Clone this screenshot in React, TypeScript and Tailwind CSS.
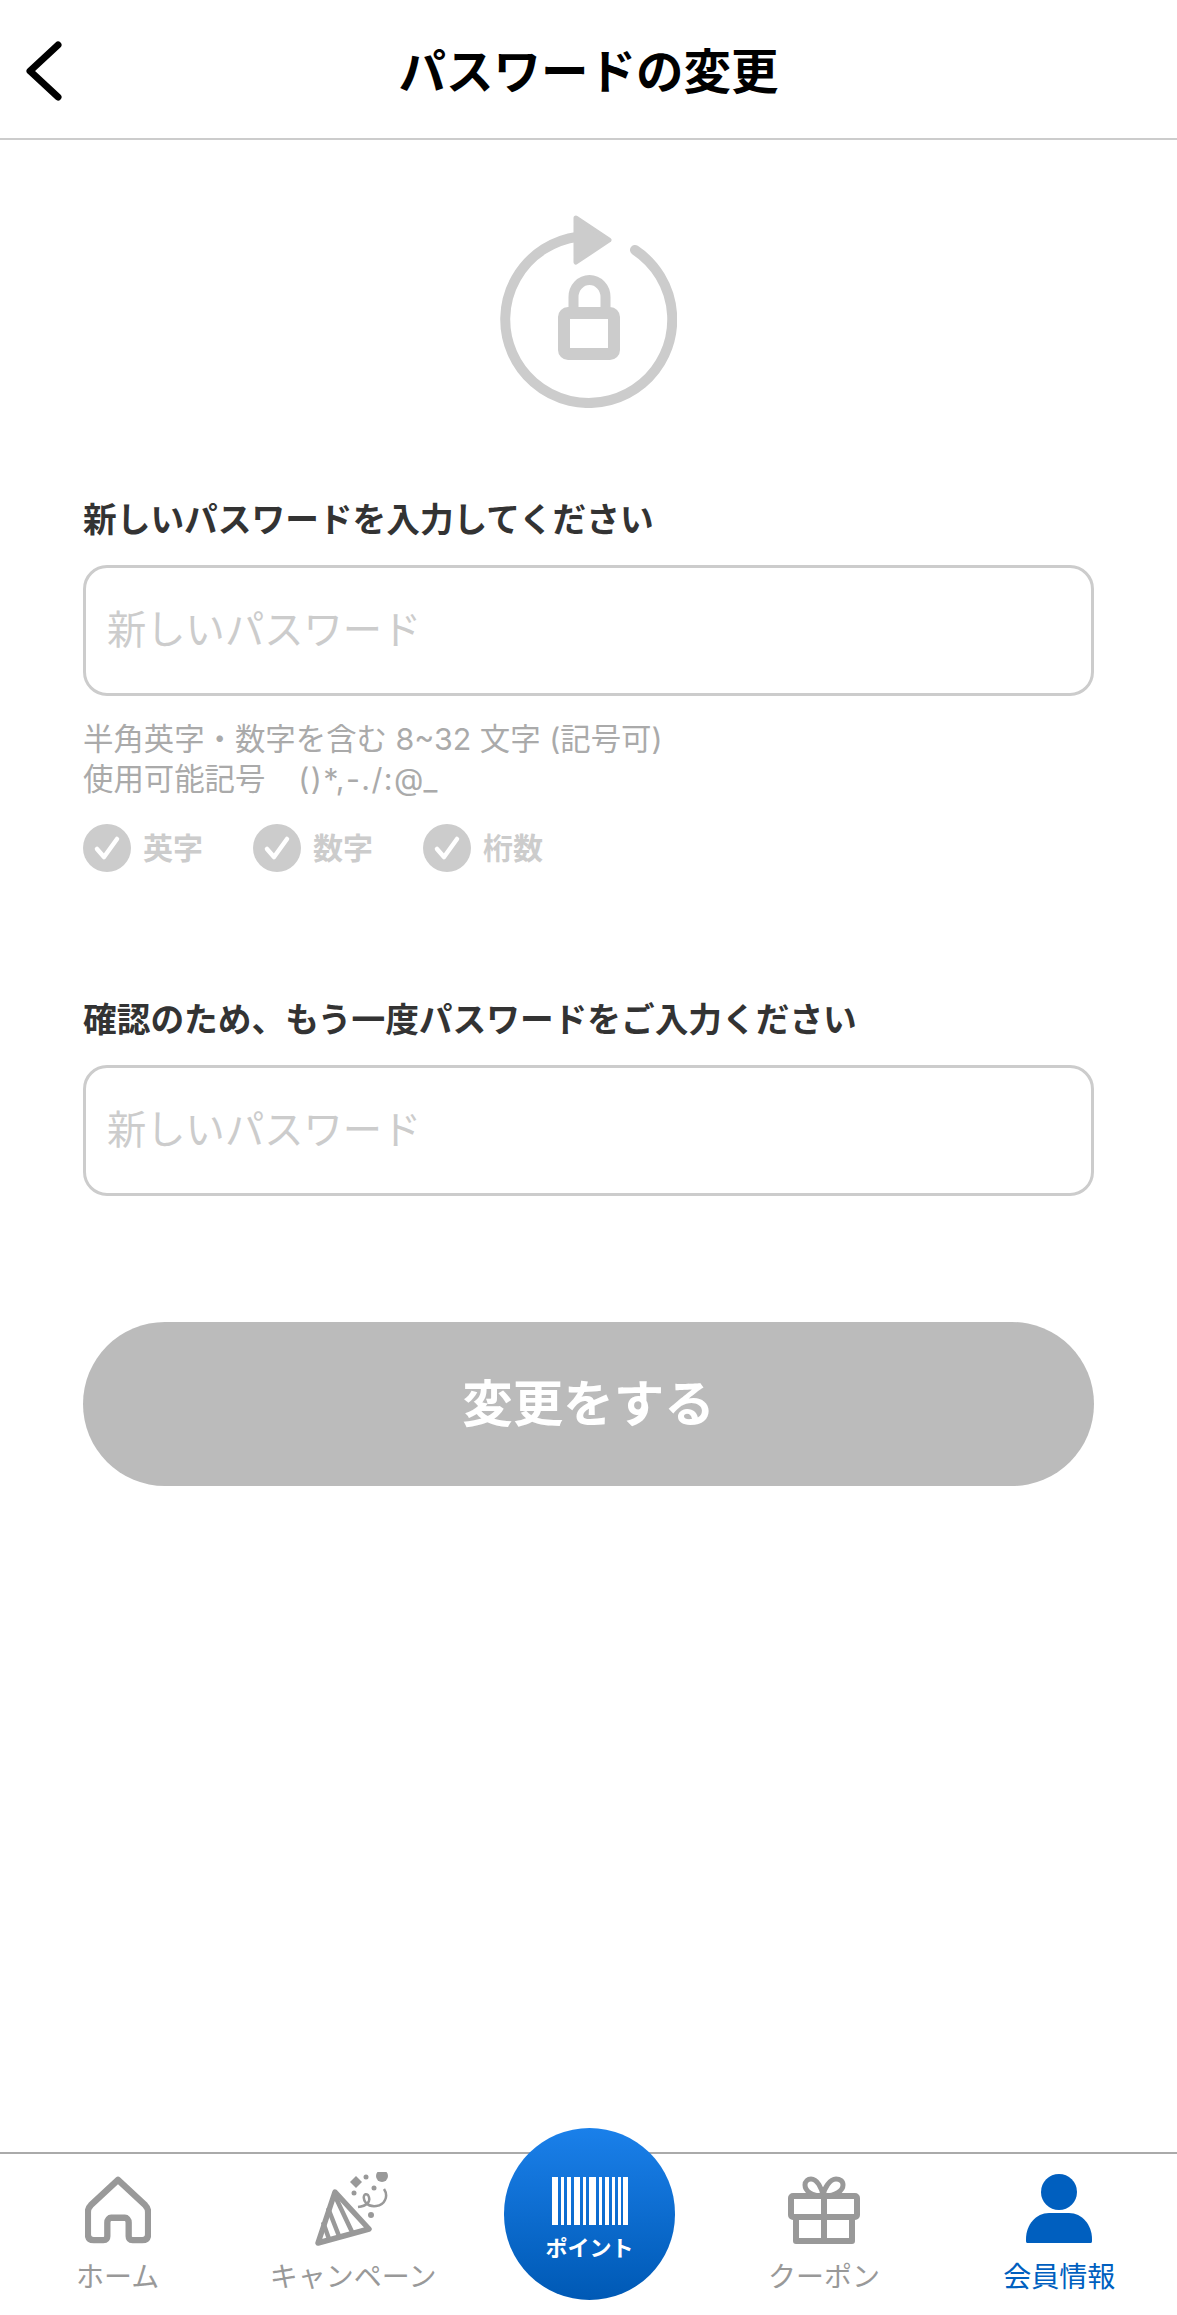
const jp = "font-['Inter','Noto_Sans_CJK_JP',sans-serif]";

const RenewIcon = () => (
  <svg width="177" height="193" viewBox="0 0 177 193" fill="none" stroke="#cccccc">
    <path d="M135 35A83.5 83.5 0 1 1 78 21.7" strokeWidth="10" strokeLinecap="round" />
    <path d="M76 3L109 25L76 47Z" fill="#cccccc" strokeWidth="5" strokeLinejoin="round" />
    <path d="M73.5 92V82a16 17 0 0 1 32 0V92" strokeWidth="10" />
    <rect x="64" y="98" width="50" height="41" rx="4" strokeWidth="12" />
  </svg>
);

const CheckItem = ({ label }: { label: string }) => (
  <div className="flex items-center gap-3">
    <svg width="48" height="48" viewBox="0 0 48 48">
      <circle cx="24" cy="24" r="24" fill="#cccccc" />
      <path d="M14 25L21 33L34 15" fill="none" stroke="#ffffff" strokeWidth="4.5" strokeLinecap="round" strokeLinejoin="round" />
    </svg>
    <span className="text-[30px] leading-[48px] font-bold text-[#cccccc]">{label}</span>
  </div>
);

const PasswordField = () => (
  <div className="flex h-[131px] items-center rounded-[24px] border-[3px] border-[#cccccc] bg-white pl-[21px] text-[39.3px] text-[#cccccc]">
    新しいパスワード
  </div>
);

const HomeIcon = () => (
  <svg width="66" height="68" viewBox="0 0 68 68" fill="none" stroke="#999999" strokeWidth="6.5" strokeLinejoin="round">
    <path d="M34 3L62 29C64 31 65 33 65 36V59C65 63 63 65 59 65H49C46 65 45 63 45 61V47C45 44 43 42 41 42H27C25 42 23 44 23 47V61C23 63 22 65 19 65H9C5 65 3 63 3 59V36C3 33 4 31 6 29Z" />
  </svg>
);

const PartyIcon = () => (
  <svg className="-translate-x-[2px] translate-y-[2px]" width="76" height="74" viewBox="0 0 74 74" fill="none" stroke="#999999" strokeLinejoin="round">
    <path d="M21 20L55 57L4 71Z" strokeWidth="5.5" />
    <path d="M14 36L25 64M9 50L15 67M21 24L39 62" strokeWidth="4.5" />
    <circle cx="68" cy="4" r="6" fill="#999999" stroke="none" />
    <path d="M39 7L42 4L45 7L48 10L45 13L42 16L39 13L36 10Z" fill="#999999" stroke="none" />
    <path d="M44 35C52 34 58 30 54 23C50 20 48 26 52 31C57 36 68 35 71 28C73 24 72 20 70 17" strokeWidth="2.5" />
    <circle cx="52" cy="5" r="2.5" fill="#999999" stroke="none" />
    <circle cx="60" cy="16" r="2.5" fill="#999999" stroke="none" />
    <circle cx="40" cy="21" r="2.5" fill="#999999" stroke="none" />
    <circle cx="57" cy="43" r="3" fill="#999999" stroke="none" />
  </svg>
);

const GiftIcon = () => (
  <svg width="72" height="68" viewBox="0 0 72 68" fill="none" stroke="#999999" strokeWidth="6" strokeLinejoin="round">
    <rect x="3" y="20" width="66" height="21" rx="2" />
    <path d="M8 41V65H64V41M36 20V65" />
    <path d="M34 20C24 20 17 15 17 9C17 5 20 3 23 3C29 3 34 12 35 20C36 12 42 3 48 3C52 3 55 5 55 9C55 15 47 20 37 20" strokeWidth="5" />
  </svg>
);

const PersonIcon = () => (
  <svg width="68" height="70" viewBox="0 0 68 70" fill="#005fbf">
    <ellipse cx="34" cy="18" rx="18" ry="18" />
    <path d="M1 65C1 51 11 39 24 39H44C57 39 67 51 67 65V67C67 69 66 69 65 69H3C2 69 1 69 1 67Z" />
  </svg>
);

const BarcodeIcon = () => {
  const bars = [
    [0, 6], [9, 3], [15, 4], [22, 6], [31, 3], [37, 7], [47, 3], [53, 4], [60, 3], [66, 3], [71, 5],
  ];
  return (
    <svg width="76" height="48" viewBox="0 0 76 48" fill="#ffffff">
      {bars.map(([x, w]) => (
        <rect key={x} x={x} y="0" width={w} height="48" />
      ))}
    </svg>
  );
};

const TabItem = ({ label, active, children }: { label: string; active?: boolean; children: React.ReactNode }) => (
  <div className="flex flex-col items-center">
    <div className="flex h-[72px] items-end">{children}</div>
    <span className={`mt-[16px] text-[28px] leading-[34px] ${active ? "text-[#005fbf]" : "text-[#999999]"}`}>{label}</span>
  </div>
);

export default function App() {
  return (
    <div className={`relative flex h-[2315px] w-[1177px] flex-col bg-white ${jp}`}>
      <header className="relative flex h-[140px] items-center justify-center border-b-2 border-[#cccccc] pt-[5px]">
        <svg className="absolute left-[24px] top-[41px]" width="40" height="60" viewBox="0 0 40 60" fill="none">
          <path d="M34 4L6 30L34 56" stroke="#000000" strokeWidth="7" strokeLinecap="round" strokeLinejoin="round" />
        </svg>
        <h1 className="text-[47.5px] font-bold text-black">パスワードの変更</h1>
      </header>

      <main className="flex-1 px-[83px]">
        <div className="mt-[75px] flex justify-center">
          <RenewIcon />
        </div>

        <p className="mt-[88px] text-[33.7px] leading-[48px] font-bold text-[#333333]">新しいパスワードを入力してください</p>
        <div className="mt-[21px]">
          <PasswordField />
        </div>
        <p className="mt-[23px] text-[30.4px] leading-[40px] text-[#aaaaaa]">
          半角英字・数字を含む 8~32 文字 (記号可)
          <br />
          使用可能記号<span className="ml-[33px] tracking-[1.4px]">()*,-./:@_</span>
        </p>
        <div className="mt-[25px] flex gap-[50px]">
          <CheckItem label="英字" />
          <CheckItem label="数字" />
          <CheckItem label="桁数" />
        </div>

        <p className="mt-[124px] text-[33.7px] leading-[48px] font-bold text-[#333333]">確認のため、もう一度パスワードをご入力ください</p>
        <div className="mt-[21px]">
          <PasswordField />
        </div>

        <button className="mt-[126px] flex h-[164px] w-full items-center justify-center rounded-full bg-[#bbbbbb] text-[50.5px] font-bold text-white">
          変更をする
        </button>
      </main>

      <footer className="grid h-[163px] grid-cols-5 border-t-2 border-[#aaaaaa] pt-[18px]">
        <TabItem label="ホーム"><HomeIcon /></TabItem>
        <TabItem label="キャンペーン"><PartyIcon /></TabItem>
        <div />
        <TabItem label="クーポン"><GiftIcon /></TabItem>
        <TabItem label="会員情報" active><PersonIcon /></TabItem>
      </footer>

      <div className="absolute left-[504px] top-[2128px] flex h-[172px] w-[171px] flex-col items-center rounded-full bg-gradient-to-b from-[#1a80ea] to-[#0059b5] pt-[49px]">
        <BarcodeIcon />
        <span className="mt-[8px] text-[22px] leading-[30px] font-bold text-white">ポイント</span>
      </div>
    </div>
  );
}
